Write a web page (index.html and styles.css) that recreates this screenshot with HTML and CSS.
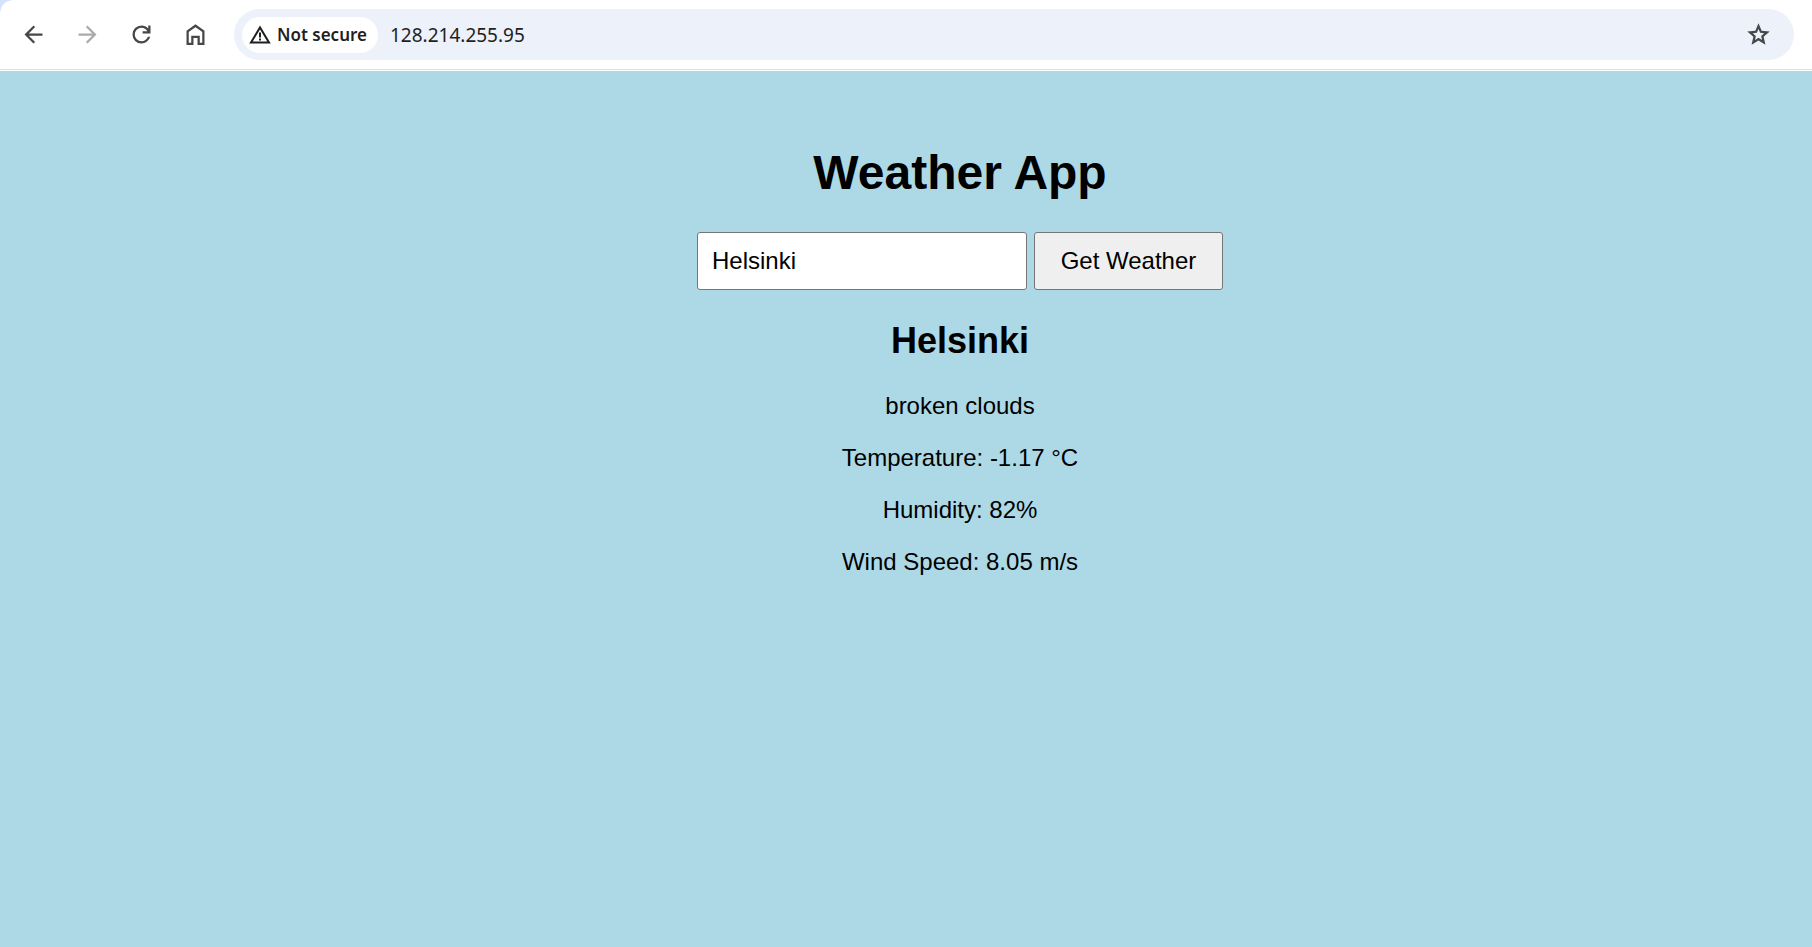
FILE: index.html
```html
<!DOCTYPE html>
<html lang="en">
<head>
<meta charset="utf-8">
<title>Weather App</title>
<link rel="stylesheet" href="styles.css">
</head>
<body>
<header class="toolbar">
  <nav class="nav" aria-label="Browser">
    <button class="icon-button" type="button" aria-label="Back">
      <svg class="icon" viewBox="0 0 24 24"><path fill="currentColor" d="M20 11H7.83l5.59-5.59L12 4l-8 8 8 8 1.41-1.41L7.83 13H20z"/></svg>
    </button>
    <button class="icon-button icon-button-muted" type="button" aria-label="Forward">
      <svg class="icon" viewBox="0 0 24 24"><path fill="currentColor" d="M4 11h12.17l-5.59-5.59L12 4l8 8-8 8-1.41-1.41L16.17 13H4z"/></svg>
    </button>
    <button class="icon-button" type="button" aria-label="Reload">
      <svg class="icon" viewBox="0 0 24 24"><path fill="currentColor" d="M12 20q-3.35 0-5.675-2.325T4 12t2.325-5.675T12 4q1.725 0 3.3.713T18 6.75V4h2v7h-7V9h4.2q-.8-1.4-2.187-2.2T12 6Q9.5 6 7.75 7.75T6 12t1.75 4.25T12 18q1.925 0 3.475-1.1T17.65 14h2.1q-.7 2.65-2.85 4.325T12 20"/></svg>
    </button>
    <button class="icon-button" type="button" aria-label="Home">
      <svg class="icon" viewBox="0 0 24 24"><path fill="none" stroke="currentColor" stroke-width="2" d="M5 20.400V9.200L12 4.200l7 5V20.400h-4.200v-6.400h-5.600v6.400z"/></svg>
    </button>
  </nav>
  <div class="address">
    <button class="chip" type="button">
      <svg class="chip-icon" viewBox="0 0 22 20"><path fill="none" stroke="currentColor" stroke-width="2" d="M2 17.500L11 2.500l9 15z"/><path fill="currentColor" d="M10 7.500h2v5h-2zM10 13.500h2v2h-2z"/></svg>
      Not secure
    </button>
    <input class="url" type="text" aria-label="Address" value="128.214.255.95">
    <button class="icon-button" type="button" aria-label="Bookmark this page">
      <svg class="icon" viewBox="0 0 24 24"><path fill="currentColor" d="m8.850 16.825 3.150-1.900 3.150 1.925-.825-3.600 2.775-2.400-3.650-.325-1.450-3.400-1.450 3.375-3.650.325 2.775 2.425zM5.825 21l1.625-7.025L2 9.250l7.200-.625L12 2l2.800 6.625 7.200.625-5.450 4.725L18.175 21 12 17.275z"/></svg>
    </button>
  </div>
</header>
<main class="page">
  <h1 class="title">Weather App</h1>
  <form class="search">
    <input class="city" type="text" aria-label="City" value="Helsinki">
    <button class="submit" type="button">Get Weather</button>
  </form>
  <section class="report">
    <h2 class="place">Helsinki</h2>
    <p class="line">broken clouds</p>
    <p class="line">Temperature: -1.17 °C</p>
    <p class="line">Humidity: 82%</p>
    <p class="line">Wind Speed: 8.05 m/s</p>
  </section>
</main>
</body>
</html>
```

FILE: styles.css
```css
* {
  box-sizing: border-box;
}

body {
  display: flex;
  flex-direction: column;
  min-height: 100vh;
  margin: 0;
  background: #add8e6;
  color: #000;
  font-family: "Liberation Sans", Arial, sans-serif;
}

.toolbar {
  display: flex;
  align-items: center;
  gap: 21px;
  margin-bottom: 1px;
  padding: 9px 18px 9px 15px;
  border-bottom: 1px solid #dfe1e0;
  background: radial-gradient(circle at 12px 12px, #fff 11px, #d3e3fd 12px) 0 0 / 12px 12px no-repeat, #fff;
  box-shadow: 0 1px 0 #fff;
}

.nav {
  display: flex;
  gap: 18px;
}

.icon-button {
  display: flex;
  align-items: center;
  justify-content: center;
  width: 36px;
  height: 36px;
  padding: 0;
  border: 0;
  border-radius: 50%;
  background: none;
  color: #474747;
}

.icon-button-muted {
  color: #ababab;
}

.icon {
  width: 27px;
  height: 27px;
}

.address {
  display: flex;
  flex: 1;
  align-items: center;
  gap: 12px;
  height: 51px;
  padding: 0 18px 0 8px;
  border-radius: 26px;
  background: #ecf1fa;
  color: #1f1f1f;
  font-family: "Noto Sans", sans-serif;
}

.chip {
  display: flex;
  align-items: center;
  gap: 6px;
  height: 36px;
  padding: 0 11px 0 7px;
  border: 0;
  border-radius: 18px;
  background: #fff;
  color: inherit;
  font: 600 17px/24px "Noto Sans", sans-serif;
}

.chip-icon {
  width: 22px;
  height: 20px;
}

.url {
  flex: 1;
  min-width: 0;
  padding: 0;
  border: 0;
  outline: 0;
  background: none;
  color: inherit;
  font: 19px/28px "Noto Sans", sans-serif;
}

.page {
  padding: 74px 0 0 108px;
  text-align: center;
}

.title {
  margin: 0 0 31px;
  font-size: 48px;
  line-height: 56px;
}

.search {
  display: flex;
  justify-content: center;
  gap: 7px;
}

.city,
.submit {
  height: 58px;
  border: 1px solid #767676;
  border-radius: 3px;
  color: #000;
  font: 24px/28px "Liberation Sans", Arial, sans-serif;
}

.city {
  width: 330px;
  padding: 0 14px;
  background: #fff;
}

.submit {
  width: 189px;
  padding: 0;
  background: #efefef;
}

.place {
  margin: 30px 0;
  font-size: 36px;
  line-height: 42px;
}

.line {
  margin: 0 0 24px;
  font-size: 24px;
  line-height: 28px;
}
```
